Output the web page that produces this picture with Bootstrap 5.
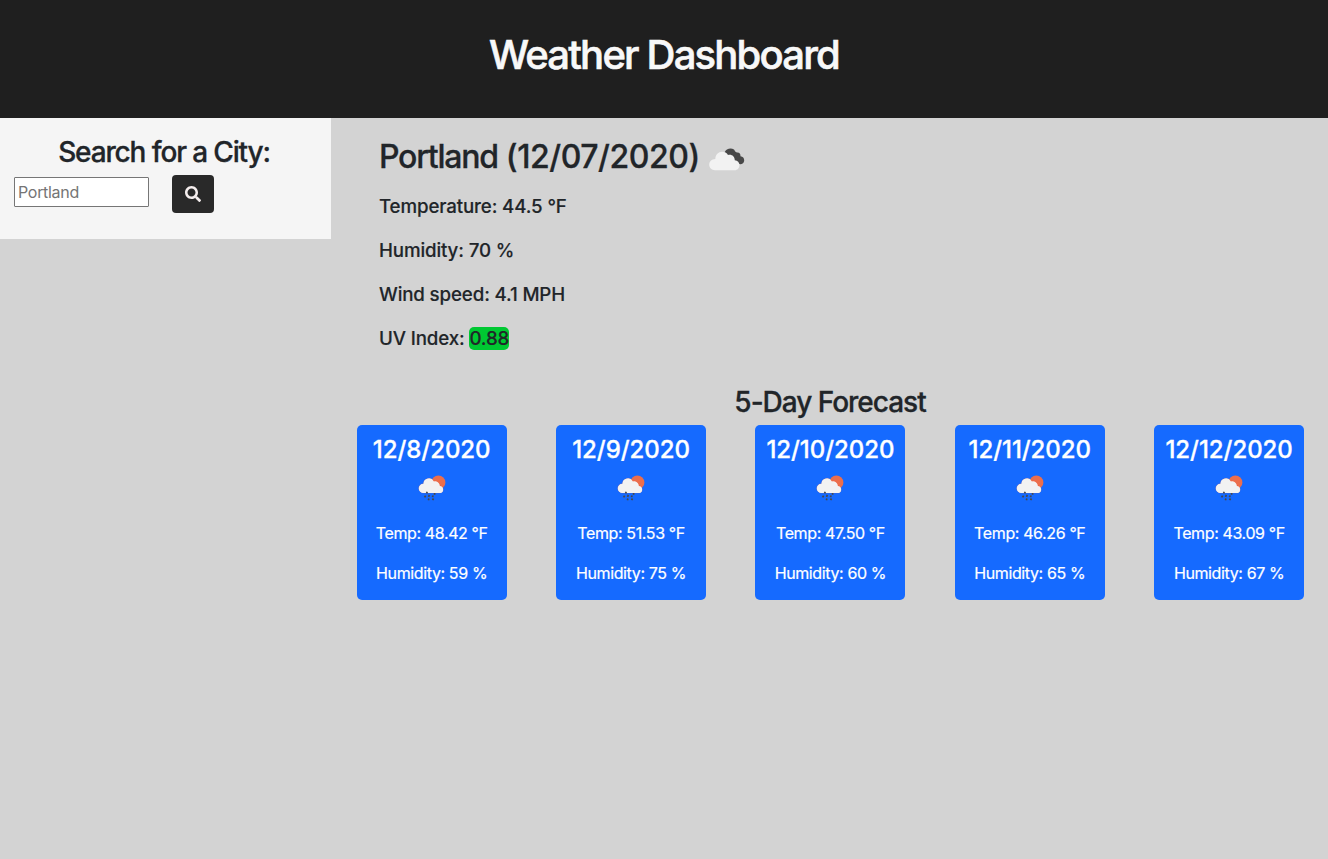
<!DOCTYPE html>
<html lang="en">
<head>
<meta charset="utf-8">
<meta name="viewport" content="width=device-width, initial-scale=1">
<title>Weather Dashboard</title>
<link href="https://cdn.jsdelivr.net/npm/bootstrap@5.3.0/dist/css/bootstrap.min.css" rel="stylesheet">
<style>
body{background:#d3d3d3;color:#212529;font-family:Inter,"Liberation Sans",sans-serif;min-height:100vh}
h1,h2,h3,h4{font-weight:500;white-space:nowrap;-webkit-text-stroke:.3px currentColor}
.site-header{background:#1f1f1f;color:#f8f8f8;height:118px;padding-top:31px}
.site-header h1{font-size:40px;letter-spacing:-1.8px;-webkit-text-stroke-width:.6px}
.search-panel{background:#f5f5f5;height:121px;width:331px;padding:17px 14px 0}
.search-panel h3{font-size:28px;line-height:34px;letter-spacing:-1.14px;margin:0 0 6px;padding-right:3px}
.city-input{width:135px;height:30px;margin-bottom:4px;border:1px solid #767676;background:#fff;padding:1px 3px;font-size:16px;letter-spacing:-.3px;border-radius:1px}
.city-input::placeholder{color:#757575}
.search-btn{width:42px;height:38px;background:#292929;margin-left:23px;border-radius:4px}
.current{padding:20px 0 0 47px;height:266px}
.current h2{font-size:32px;letter-spacing:-.45px;height:38px;margin-bottom:17px}
.city-name{letter-spacing:-1.25px}
.current-icon{margin:10px 0 0 9px}
.current p{font-size:18.72px;font-weight:500;letter-spacing:-.13px;height:28px;line-height:28px;margin-bottom:16px;white-space:nowrap;-webkit-text-stroke:.15px currentColor}
.uv{background:#00c832;border-radius:5px}
.forecast-title{font-size:28px;line-height:36px;letter-spacing:-1.02px;margin:0 0 5px}
.forecast-days{margin-right:-.8px}
.day-card{width:150px;height:175px;background:#156aff;border-radius:5px;padding-top:10px;color:#fff}
.day-card h4{font-size:24px;line-height:29px;letter-spacing:-.05px;margin:0}
.day-icon{height:57px;padding-top:11px}
.day-icon svg{display:block;margin-left:61px}
.day-card p{font-size:16px;line-height:24px;letter-spacing:-.38px;margin:0 0 16px;white-space:nowrap;-webkit-text-stroke:.2px currentColor}
</style>
</head>
<body>
<svg class="d-none">
<symbol id="rain" viewBox="0 0 28 27">
<circle cx="20.400" cy="7.400" r="7" fill="#ec6e4c"/>
<path d="M5.200 17.900a4.600 4.600 0 0 1 .2-9.200A5.500 5.500 0 0 1 15.800 6.400 4.900 4.900 0 0 1 21.900 11 3.500 3.500 0 0 1 22.500 17.900z" fill="#f2f2f2" stroke="#f04f30" stroke-width=".7" stroke-opacity=".3"/>
<path d="M5.200 17.900a4.300 4.300 0 0 1 .5-8.900A5.200 5.200 0 0 1 15.600 6.700 4.600 4.600 0 0 1 21.600 11.200 3.400 3.400 0 0 1 22.300 17.900z" fill="#f2f2f2"/>
<path d="M9.200 16.700l-.6 1.700M7.600 20.600l-1 1.800M11.400 20l-.9 1.800M16.600 18v1.800M15.200 20.500l-.8 1.700M10.900 23.600l-.5 1.600M15.500 23.500l-.9 1.700" stroke="#484848" stroke-width="1.700" fill="none"/>
</symbol>
</svg>
<header class="site-header text-center"><h1>Weather Dashboard</h1></header>
<div class="row g-0">
<aside class="col-3"><div class="search-panel">
<h3 class="text-center">Search for a City:</h3>
<form class="d-flex align-items-center">
<input class="city-input" type="text" placeholder="Portland" aria-label="City">
<button class="search-btn btn p-0 border-0 d-flex align-items-center justify-content-center" type="button" aria-label="Search"><svg width="16" height="16" viewBox="0 0 512 512" fill="#f5eeee"><path d="M505 442.700 405.300 343c-4.500-4.500-10.600-7-17-7H372c27.600-35.300 44-79.700 44-128C416 93.100 322.900 0 208 0S0 93.100 0 208s93.100 208 208 208c48.300 0 92.700-16.400 128-44v16.300c0 6.400 2.500 12.500 7 17l99.700 99.700c9.400 9.400 24.600 9.400 33.900 0l28.300-28.300c9.400-9.400 9.400-24.600.1-34zM208 336c-70.700 0-128-57.200-128-128 0-70.700 57.200-128 128-128 70.700 0 128 57.200 128 128 0 70.700-57.200 128-128 128z"/></svg></button>
</form></div></aside>
<main class="col-9 overflow-hidden">
<section class="current">
<h2 class="d-flex"><span><span class="city-name">Portland</span> (12/07/2020)</span><svg class="current-icon" width="36" height="23" viewBox="0 0 36 23">
<path d="M15.500 4.500C17 .5 22-.6 25 1.500 26 3 26.300 4.200 28 4.500 30.500 4.200 31.600 6 31.500 8.200 34.500 8.600 35.700 11 35 13.500 34.200 16 31.500 17 29.500 15.500L24 14z" fill="#484848"/>
<path d="M6 22.200C2.600 22.200.2 19.800.2 16.600.2 13.400 2.700 11.200 6.300 11 6.500 6.700 9.300 3.700 13.200 3.700 15.700 3.700 17.800 4.800 19 7 22.600 6 25.700 8.200 25.800 12.300 28.700 12.500 30.400 14.500 30.400 17.200 30.400 20 28.500 22.200 25.600 22.200z" fill="#f2f2f2"/>
</svg></h2>
<p>Temperature: 44.5 °F</p>
<p>Humidity: 70 %</p>
<p>Wind speed: 4.1 MPH</p>
<p>UV Index: <span class="uv">0.88</span></p>
</section>
<h3 class="forecast-title text-center">5-Day Forecast</h3>
<div class="forecast-days"><div class="row row-cols-5 g-0">
<div class="col d-flex justify-content-center"><div class="day-card text-center"><h4>12/8/2020</h4><div class="day-icon"><svg width="28" height="27"><use href="#rain"/></svg></div><p>Temp: 48.42 °F</p><p>Humidity: 59 %</p></div></div>
<div class="col d-flex justify-content-center"><div class="day-card text-center"><h4>12/9/2020</h4><div class="day-icon"><svg width="28" height="27"><use href="#rain"/></svg></div><p>Temp: 51.53 °F</p><p>Humidity: 75 %</p></div></div>
<div class="col d-flex justify-content-center"><div class="day-card text-center"><h4>12/10/2020</h4><div class="day-icon"><svg width="28" height="27"><use href="#rain"/></svg></div><p>Temp: 47.50 °F</p><p>Humidity: 60 %</p></div></div>
<div class="col d-flex justify-content-center"><div class="day-card text-center"><h4>12/11/2020</h4><div class="day-icon"><svg width="28" height="27"><use href="#rain"/></svg></div><p>Temp: 46.26 °F</p><p>Humidity: 65 %</p></div></div>
<div class="col d-flex justify-content-center"><div class="day-card text-center"><h4>12/12/2020</h4><div class="day-icon"><svg width="28" height="27"><use href="#rain"/></svg></div><p>Temp: 43.09 °F</p><p>Humidity: 67 %</p></div></div>
</div></div>
</main></div>
</body>
</html>
